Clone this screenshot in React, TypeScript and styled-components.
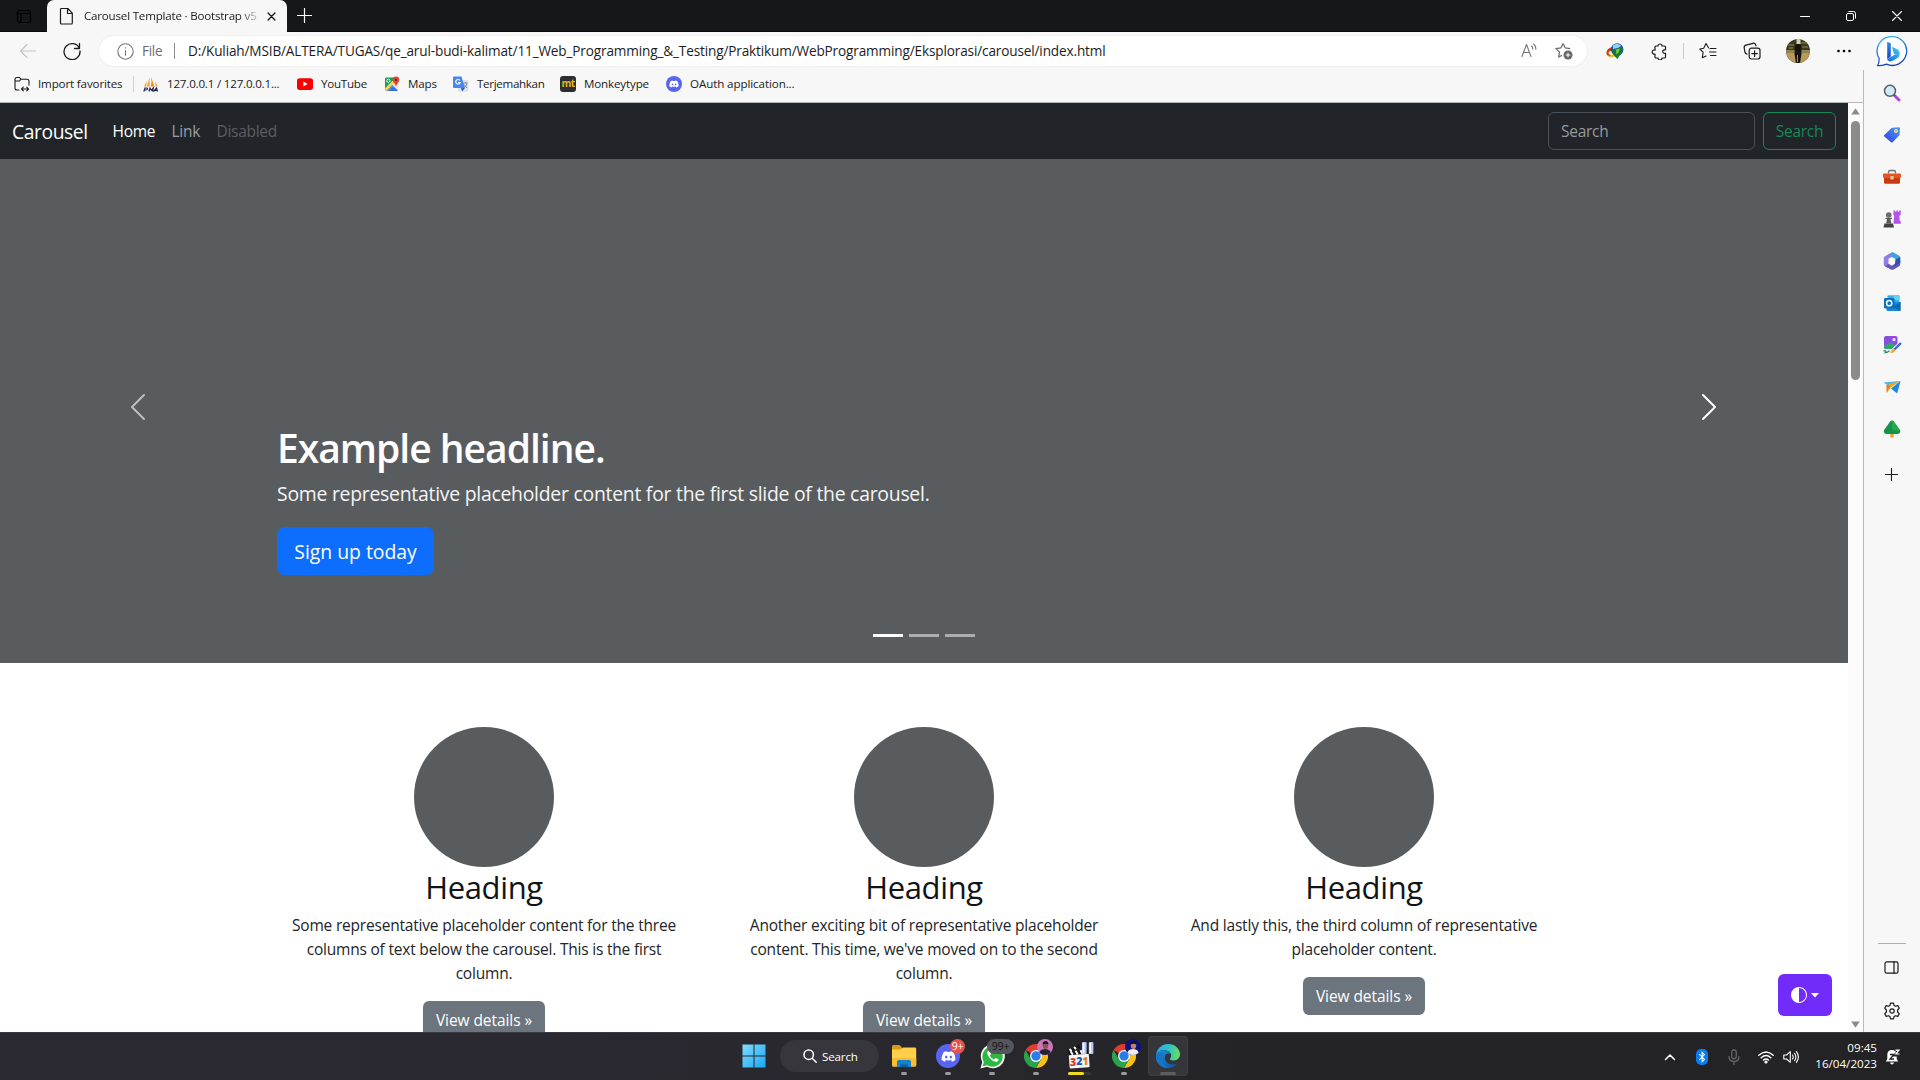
import React from 'react';
import styled, { createGlobalStyle, css } from 'styled-components';
import { FaDiscord, FaBluetoothB } from 'react-icons/fa';

const GlobalStyle = createGlobalStyle`
  * { box-sizing: border-box; }
  html, body { margin: 0; padding: 0; overflow: hidden; }
  body { font-family: "Open Sans", "Noto Sans", sans-serif; background: #fff; }
  svg { display: block; flex: none; }
  p, h1, h2 { margin: 0; }
`;

const uiText = css`
  font-size: 11.6px;
  letter-spacing: -0.15px;
  white-space: nowrap;
`;

const Window = styled.div`
  width: 1920px;
  height: 1080px;
  display: flex;
  flex-direction: column;
  overflow: hidden;
  background: #f7f7f7;
`;

/* ---------- Title bar ---------- */
const TitleBar = styled.header`
  height: 32px;
  flex: none;
  display: flex;
  align-items: stretch;
  background: #161719;
  border-bottom: 1px solid #08090a;
`;
const TabActions = styled.div`
  width: 47px;
  display: flex;
  align-items: center;
  padding-left: 16px;
`;
const Tab = styled.div`
  width: 240px;
  height: 32px;
  display: flex;
  align-items: center;
  padding: 0 10px 0 11px;
  background: #f7f7f7;
  border-radius: 7px 7px 0 0;
`;
const TabTitle = styled.span`
  ${uiText}
  letter-spacing: -0.21px;
  width: 174px;
  margin: 0 9px 0 6px;
  padding-bottom: 1px;
  overflow: hidden;
  background: linear-gradient(90deg, #1b1b1b 155px, #c4c4c4 173px);
  -webkit-background-clip: text;
  background-clip: text;
  color: transparent;
`;
const NewTab = styled.div`
  width: 35px;
  display: flex;
  align-items: center;
  justify-content: center;
`;
const WindowControls = styled.div`
  margin-left: auto;
  display: flex;
`;
const WindowButton = styled.div`
  width: 46px;
  display: flex;
  align-items: center;
  justify-content: center;
`;

/* ---------- Address row ---------- */
const Toolbar = styled.div`
  height: 38px;
  flex: none;
  display: flex;
  align-items: center;
`;
const Cell = styled.div<{ $w: number }>`
  width: ${p => p.$w}px;
  height: 38px;
  flex: none;
  display: flex;
  align-items: center;
  justify-content: center;
`;
const NavButtons = styled.div`
  width: 99px;
  flex: none;
  display: flex;
  align-items: center;
  gap: 26px;
  padding-left: 19px;
`;
const AddressBar = styled.div`
  width: 1488px;
  height: 30px;
  flex: none;
  display: flex;
  align-items: center;
  padding: 0 10px 0 18px;
  border-radius: 15px;
  background: #fff;
  box-shadow: 0 0 2px rgba(0, 0, 0, 0.1);
  font-size: 13.6px;
  letter-spacing: -0.146px;
  white-space: nowrap;
`;
const Scheme = styled.span`
  width: 32px;
  margin-left: 8px;
  padding-bottom: 1px;
  color: #6d6d6d;
  letter-spacing: -0.3px;
`;
const Url = styled.span`
  margin-left: 13px;
  padding-bottom: 1px;
  color: #1d1d1d;
  flex: 1;
`;
const VLine = styled.div<{ $h: number; $c: string }>`
  width: 1px;
  height: ${p => p.$h}px;
  flex: none;
  background: ${p => p.$c};
`;

/* ---------- Body ---------- */
const Body = styled.div`
  height: 962px;
  flex: none;
  display: flex;
`;
const Main = styled.div`
  width: 1863px;
  display: flex;
  flex-direction: column;
`;
const Bookmarks = styled.div`
  height: 33px;
  flex: none;
  display: flex;
  align-items: center;
  padding: 0 0 5px 14px;
  border-bottom: 1px solid #b5b6b8;
`;
const Bookmark = styled.div<{ $w: number; $indent?: number; $ls?: number }>`
  ${uiText}
  letter-spacing: ${p => p.$ls ?? -0.15}px;
  width: ${p => p.$w}px;
  padding-left: ${p => p.$indent ?? 0}px;
  display: flex;
  align-items: center;
  gap: 8px;
  color: #1b1b1b;
`;
const MonkeyIcon = styled.span`
  width: 16px;
  height: 16px;
  border-radius: 3px;
  background: #2c2e31;
  color: #e2b714;
  font: 700 10px/14px "Open Sans", sans-serif;
  letter-spacing: -0.6px;
  text-align: center;
`;
const DiscordDot = styled.span<{ $s: number }>`
  width: ${p => p.$s}px;
  height: ${p => p.$s}px;
  border-radius: 50%;
  background: #5865f2;
  color: #fff;
  display: flex;
  align-items: center;
  justify-content: center;
`;
const PageRow = styled.div`
  height: 929px;
  display: flex;
`;
const Page = styled.div`
  position: relative;
  width: 1848px;
  height: 929px;
  overflow: hidden;
  background: #fff;
`;
const ScrollTrack = styled.div`
  width: 15px;
  display: flex;
  flex-direction: column;
  align-items: center;
  background: #fcfcfc;
  padding: 5px 0 4px;
`;
const ScrollThumb = styled.div`
  width: 9px;
  height: 259px;
  margin: 6px 0 auto;
  border-radius: 5px;
  background: #8b8b8b;
`;

/* ---------- Navbar ---------- */
const Navbar = styled.nav`
  height: 56px;
  display: flex;
  align-items: center;
  padding: 0 12px;
  background: #212529;
  font-size: 15.5px;
  letter-spacing: -0.28px;
`;
const Brand = styled.span`
  width: 100.5px;
  color: #fff;
  font-size: 19.3px;
  letter-spacing: -0.42px;
`;
const NavLink = styled.span<{ $c: string; $w: number }>`
  width: ${p => p.$w}px;
  color: ${p => p.$c};
`;
const SearchInput = styled.div`
  width: 207px;
  height: 38px;
  margin: 0 8px 0 auto;
  padding: 0 12px;
  display: flex;
  align-items: center;
  border: 1px solid #495057;
  border-radius: 6px;
  color: #969a9e;
`;
const SearchButton = styled.div`
  width: 73px;
  height: 38px;
  display: flex;
  align-items: center;
  justify-content: center;
  border: 1px solid #198754;
  border-radius: 6px;
  color: #198754;
`;

/* ---------- Carousel ---------- */
const Carousel = styled.section`
  position: relative;
  height: 504px;
  display: grid;
  grid-template-columns: 277px 1fr 277px;
  background: #595c5e;
  color: #fff;
`;
const Control = styled.div<{ $dim?: boolean }>`
  display: flex;
  align-items: center;
  justify-content: center;
  padding: 0 1px 8px 0;
  opacity: ${p => (p.$dim ? 0.6 : 1)};
`;
const Caption = styled.div`
  display: flex;
  flex-direction: column;
  justify-content: flex-end;
  align-items: flex-start;
  padding-bottom: 88px;
`;
const Headline = styled.h1`
  margin-bottom: 7px;
  font-size: 39px;
  font-weight: 600;
  line-height: 48px;
  letter-spacing: -1px;
`;
const Lead = styled.p`
  margin-bottom: 18px;
  font-size: 19.4px;
  line-height: 30px;
  letter-spacing: -0.257px;
  color: #f4f5f5;
`;
const SignUp = styled.div`
  width: 157px;
  height: 48px;
  display: flex;
  align-items: center;
  justify-content: center;
  border-radius: 8px;
  background: #0d6efd;
  font-size: 19.4px;
  letter-spacing: -0.02px;
`;
const Indicators = styled.div`
  position: absolute;
  left: 0;
  right: 0;
  bottom: 26px;
  display: flex;
  justify-content: center;
  gap: 6px;
`;
const Indicator = styled.span<{ $active?: boolean }>`
  width: 30px;
  height: 3px;
  background: ${p => (p.$active ? '#fff' : '#acadae')};
`;

/* ---------- Feature columns ---------- */
const Features = styled.section`
  display: flex;
  padding: 64px 264px 0;
`;
const Feature = styled.article`
  width: 440px;
  display: flex;
  flex-direction: column;
  align-items: center;
  text-align: center;
  color: #212529;
`;
const Circle = styled.div`
  width: 140px;
  height: 140px;
  border-radius: 50%;
  background: #595c5e;
`;
const FeatureTitle = styled.h2`
  margin: 1px 0 7px;
  font-size: 31px;
  font-weight: 400;
  line-height: 38.4px;
  letter-spacing: -0.35px;
  color: #111417;
`;
const FeatureText = styled.p`
  margin-bottom: 16px;
  font-size: 15.5px;
  line-height: 24px;
  letter-spacing: -0.2px;
  white-space: pre-line;
`;
const DetailsButton = styled.div`
  width: 122px;
  height: 38px;
  display: flex;
  align-items: center;
  justify-content: center;
  border-radius: 6px;
  background: #6c757d;
  color: #fff;
  font-size: 15.5px;
  letter-spacing: -0.07px;
`;
const ThemeButton = styled.div`
  position: absolute;
  right: 16px;
  bottom: 16px;
  width: 54px;
  height: 42px;
  display: flex;
  align-items: center;
  justify-content: center;
  gap: 4px;
  border-radius: 6px;
  background: #712cf9;
`;

/* ---------- Edge side bar ---------- */
const Sidebar = styled.aside`
  width: 57px;
  display: flex;
  flex-direction: column;
  align-items: center;
  padding: 2px 1px 0 0;
  border-left: 1px solid #b9babb;
  background: #f7f7f7;
`;
const SideItem = styled.div<{ $h?: number }>`
  height: ${p => p.$h ?? 42}px;
  flex: none;
  display: flex;
  align-items: center;
  justify-content: center;
`;
const SideRule = styled.div`
  width: 28px;
  height: 1px;
  margin-top: auto;
  margin-bottom: 2px;
  background: #b0b0b0;
`;

/* ---------- Task bar ---------- */
const Taskbar = styled.footer`
  height: 48px;
  flex: none;
  display: grid;
  grid-template-columns: 732px 459px 1fr;
  border-top: 1px solid #3a393f;
  background: linear-gradient(90deg, #2b2a33 0%, #29282f 45%, #242426 65%, #232325 100%);
  color: #fff;
`;
const TaskGroup = styled.div`
  grid-column: 2;
  display: flex;
  align-items: center;
  padding-bottom: 1px;
`;
const TaskSearch = styled.div`
  ${uiText}
  width: 99px;
  height: 32px;
  margin: 0 3px 0 4px;
  padding-left: 23px;
  display: flex;
  align-items: center;
  gap: 5px;
  border-radius: 16px;
  background: #37363d;
`;
const TaskItem = styled.div<{ $active?: boolean }>`
  position: relative;
  width: 40px;
  height: 40px;
  margin: 0 2px;
  display: flex;
  align-items: center;
  justify-content: center;
  border-radius: 4px;
  background: ${p => (p.$active ? '#36353a' : 'transparent')};
  box-shadow: ${p => (p.$active ? 'inset 0 0 0 1px #3e3d42' : 'none')};
`;
const Running = styled.span<{ $w: number; $c: string; $x?: number }>`
  position: absolute;
  bottom: 1px;
  left: ${p => p.$x ?? 20 - p.$w / 2}px;
  width: ${p => p.$w}px;
  height: 3px;
  border-radius: 2px;
  background: ${p => p.$c};
`;
const Badge = styled.span<{ $w: number; $x: number; $bg: string; $c: string }>`
  position: absolute;
  top: 3px;
  left: ${p => p.$x}px;
  width: ${p => p.$w}px;
  height: 15px;
  border-radius: 8px;
  background: ${p => p.$bg};
  color: ${p => p.$c};
  font-size: 10.5px;
  line-height: 14px;
  letter-spacing: -0.2px;
  text-align: center;
`;
const BadgeFace = styled.span`
  position: absolute;
  top: 3px;
  left: 21px;
`;
const Tray = styled.div`
  display: flex;
  align-items: center;
  justify-content: flex-end;
  padding-right: 11px;
`;
const TrayIcon = styled.div<{ $w: number }>`
  width: ${p => p.$w}px;
  display: flex;
  justify-content: center;
`;
const BluetoothPill = styled.span`
  width: 12px;
  height: 16px;
  border-radius: 5px;
  background: #0a7cf0;
  display: flex;
  align-items: center;
  justify-content: center;
`;
const Clock = styled.div`
  ${uiText}
  width: 77px;
  padding-bottom: 1px;
  text-align: right;
  line-height: 16px;
  letter-spacing: 0.02px;
`;

/* ---------- Icons ---------- */
type StrokeProps = { s?: number; c?: string; w?: number; children: React.ReactNode; box?: number };
const Line = ({ s = 16, c = '#1b1b1b', w = 1.1, box = 16, children }: StrokeProps) => (
  <svg width={s} height={s} viewBox={`0 0 ${box} ${box}`} fill="none" stroke={c} strokeWidth={w} strokeLinecap="round" strokeLinejoin="round">{children}</svg>
);

const Star = 'M7 1.3 8.9 5.2 13.2 5.8M7 1.3 5.1 5.2.8 5.8 3.9 8.8 3.2 13.1 6 11.6';

const IdmIcon = () => (
  <svg width="18" height="18" viewBox="0 0 18 18">
    <ellipse cx="6" cy="10.5" rx="5.8" ry="4.8" fill="#e5c12e" transform="rotate(-18 6 10.5)" />
    <path d="M1 13c-1.300-3 .5-7 5-8l3 2-5 7z" fill="#c23b22" />
    <ellipse cx="5" cy="11" rx="2.500" ry="2" fill="#fff5bd" />
    <circle cx="11.200" cy="7.500" r="6.200" fill="#1d56a4" />
    <path d="M7 3.600c3-2.400 7-1.600 8 .4l-3 2-5 1z" fill="#92d1f3" />
    <path d="M5.500 8 11 6.500l6-1-1.500 5.500-4.200 6-4.300-4.500 2.500-.2z" fill="#1a7a29" />
    <path d="m10 7.500 4-1-1.500 4-2 2z" fill="#70cf45" />
  </svg>
);

const Avatar = () => (
  <svg width="24" height="24" viewBox="0 0 24 24">
    <defs><clipPath id="av"><circle cx="12" cy="12" r="12" /></clipPath></defs>
    <g clipPath="url(#av)">
      <rect width="24" height="24" fill="#3b3a20" />
      <rect y="11" width="24" height="4" fill="#8f8350" />
      <rect y="14" width="24" height="10" fill="#b8995a" />
      <path d="M1 6h7M15 4h7M3 9h4M16 8h6" stroke="#77713b" strokeWidth="1.500" />
      <rect x="10.500" y="0" width="4" height="5" fill="#d6d0a8" />
      <path d="M9 6.500c1-2 5-2 6 0l.5 8-1.500 9.500h-4l-1.500-9z" fill="#17130f" />
      <path d="M11.500 16v7" stroke="#a88d58" />
    </g>
  </svg>
);

const BingIcon = () => (
  <svg width="32" height="32" viewBox="0 0 32 32">
    <defs>
      <linearGradient id="bo" x1="0" y1="0" x2=".3" y2="1"><stop stopColor="#27b7ee" /><stop offset=".5" stopColor="#2383e8" /><stop offset="1" stopColor="#173fae" /></linearGradient>
      <linearGradient id="bb" x1="0" y1="0" x2="0" y2="1"><stop stopColor="#2b8cf0" /><stop offset="1" stopColor="#1a45c8" /></linearGradient>
      <linearGradient id="bc" x1="0" y1="1" x2="1" y2="0"><stop stopColor="#1668dd" /><stop offset="1" stopColor="#45d0f2" /></linearGradient>
    </defs>
    <path d="M16.300 1.600a14.400 14.400 0 1 1-5.800 27.600c-2.600 1.300-5.800 1.500-8.800 1.300 1.300-2.100 1.500-4.300 1.400-7.200A14.400 14.400 0 0 1 16.300 1.600z" fill="#fff" stroke="url(#bo)" strokeWidth="1.300" />
    <path d="m11.200 6.800 3.600 1.400v13.300l-3.600 2.500z" fill="url(#bb)" />
    <path d="m16 11.800 5.200 2.400c1.600.8 2.500 2.200 2.500 4.300 0 2.200-1 4-2.800 5l-4.700 2.600c-2.400 1-4.700 0-5-2.100l6.600-3.800 1.500-.8-1.600-1.200z" fill="url(#bc)" />
  </svg>
);

const PmaIcon = () => (
  <svg width="16" height="16" viewBox="0 0 16 16">
    <path d="M6.500 1.500 3.800 10.500h2.900zM1 10.500 3.800 5l-.6 5.500z" fill="#f3a13a" />
    <path d="M8 .5c.8 3 .5 7-.3 10h3.600z" fill="#ee8b1c" />
    <path d="M11.500 4c.8 2 1 4.500.8 6.500h2.500z" fill="#f8a845" />
    <path d="M.8 15.500 2 12h1.500q1.400.1.800 1.200-.5.900-2.500.8M6 15.500 7 12l1.300 2.200 2-2.200-.8 3.500M10.500 15.500l3-3.500 1 3.500M11.800 14.300h2.500" stroke="#1d2a55" strokeWidth="1.200" fill="none" />
  </svg>
);

const YoutubeIcon = () => (
  <svg width="16" height="16" viewBox="0 0 16 16"><rect y="2.300" width="16" height="11.600" rx="2.600" fill="#f80100" /><path d="m6.400 5.600 4.200 2.500-4.200 2.500z" fill="#fff" /></svg>
);

const MapsIcon = () => (
  <svg width="16" height="16" viewBox="0 0 16 16">
    <rect x=".8" y="1.500" width="13.500" height="13.500" rx="1.200" fill="#e8e8e8" />
    <path d="M1 2.500 2 1.500h8.500L9 7 1 14z" fill="#1f9e56" />
    <path d="m1 13.500 6-6 7 7-.5.500H2z" fill="#4e8df3" />
    <path d="m5 15 4-4 4.500 4z" fill="#2f6fe0" />
    <path d="m.8 12.500 7.700-7.700 1.800 1.800L2.500 15z" fill="#fcd34a" />
    <path d="M12 .5a3.300 3.300 0 0 1 3.300 3.400c0 2.200-2.500 3.600-3.300 6.500-.8-2.900-3.300-4.300-3.300-6.500A3.300 3.300 0 0 1 12 .5z" fill="#e74335" />
    <circle cx="12" cy="3.900" r="1.200" fill="#8c1f15" />
    <circle cx="4.300" cy="4.800" r="1.600" fill="none" stroke="#fff" strokeWidth=".9" />
  </svg>
);

const TranslateIcon = () => (
  <svg width="16" height="16" viewBox="0 0 16 16">
    <rect x="5" y="4" width="10.500" height="11.500" rx="1" fill="#dfe1e3" />
    <path d="M1 .5h7.500L12 12H1a1 1 0 0 1-1-1V1.500a1 1 0 0 1 1-1z" fill="#4687f1" />
    <path d="M8 12h4l-3 3.500z" fill="#2560c4" />
    <path d="M6.800 4.300A2.300 2.300 0 1 0 7.200 6.500H5" stroke="#fff" fill="none" strokeWidth="1.100" />
    <path d="M10.500 7h4M12.500 6v1M11 8.500l3 3.500M14 7.500c-.5 2-1.500 3.500-2.500 4" stroke="#687a8a" fill="none" strokeWidth=".8" />
  </svg>
);

const SearchColor = () => (
  <svg width="18" height="18" viewBox="0 0 18 18"><path d="m12 12 4 4" stroke="#b440e0" strokeWidth="3" strokeLinecap="round" /><path d="m10.300 10.300 1.700 1.700" stroke="#555" strokeWidth="2" /><circle cx="7" cy="6.800" r="5.500" fill="#cfeafa" stroke="#565b60" strokeWidth="1.500" /></svg>
);
const TagColor = () => (
  <svg width="18" height="18" viewBox="0 0 18 18"><defs><linearGradient id="tg" x1="1" y1="0" x2="0" y2="1"><stop stopColor="#4f9cf8" /><stop offset="1" stopColor="#2c40e0" /></linearGradient></defs><path d="M9.500 1.700 16 1.200q1 0 1 1l-.4 6.300q0 .6-.5 1.100l-6.400 6.600q-.8.700-1.600 0L1.300 10.500q-.7-.8 0-1.600L8 2.400q.6-.6 1.500-.7z" fill="url(#tg)" /><circle cx="13" cy="5" r="2" fill="#f6e27a" /><circle cx="13" cy="5" r=".8" fill="#7aa6d8" /></svg>
);
const ToolboxColor = () => (
  <svg width="18" height="18" viewBox="0 0 18 18"><path d="M5.500 5.500V4q0-1.500 1.500-1.500h4Q12.500 2.500 12.500 4v1.500" stroke="#6d7276" strokeWidth="1.300" fill="none" /><path d="M1 9h16v5.500q0 1.300-1.200 1.300H2.200Q1 15.800 1 14.500z" fill="#c93a10" /><path d="M1 5.500h16q1 0 1 1V9q0 1-1 1H1Q0 10 0 9V6.500q0-1 1-1z" fill="#e5561f" /><rect x="7.300" y="8" width="3.400" height="3.400" rx="1" fill="#f2c9a6" /></svg>
);
const ChessColor = () => (
  <svg width="18" height="18" viewBox="0 0 18 18"><path d="M10.500.5h1.800v1.600h1V.5h1.800v1.600h1V.5H17.800v4l-1.500 1.300.5 5.500h1v2.500H10.500l.7-8-.8-1.300z" fill="#b453ec" /><circle cx="5.700" cy="5" r="2.800" fill="#6c6c6c" /><path d="M2.500 7.700h6.400v1.200H7.500l.8 4.600H3.200l.8-4.600H2.500z" fill="#5a5a5a" /><path d="M1.500 13.500h8.500l1 4H.5z" fill="#424242" /></svg>
);
const M365Color = () => (
  <svg width="18" height="18" viewBox="0 0 18 18"><path d="M9 .3 2 4.200Q.8 4.900.8 6.200v6q0 1.300 1.100 2L5 15.800l2.200-2.800-1.700-1V6.800L10 4z" fill="#8e80e0" /><path d="M9 .3q.9-.3 1.700.2l5.500 3.200q1 .6 1 1.800v5.500l-4.700-2.500V7L7 4z" fill="#3da5d8" /><path d="M17.200 8v4.200q0 1.300-1.100 2l-5.400 3.200q-1.400.7-2.700 0L2 14.300l3.500-2.300 3.500 1.700 4-2.700V7.500z" fill="#6455ba" /><path d="M12.500 7.500 17.200 5v5.800l-5.700 3.700z" fill="#3152a8" /><path d="m9 5.700 2.900 1.700v3.300L9 12.400l-2.900-1.700V7.400z" fill="#fff" /></svg>
);
const OutlookColor = () => (
  <svg width="18" height="18" viewBox="0 0 18 18"><rect x="4.500" y="1.200" width="12" height="8" rx="1" fill="#35b2ec" /><path d="M10.500 1.200h5q1 0 1 1V6h-6z" fill="#65cff5" /><path d="M3.500 8h14v8q0 1-1 1h-12q-1 0-1-1z" fill="#168bd7" /><path d="m10 13 7.500-5v9z" fill="#0d66b5" /><rect x="1" y="4" width="10.500" height="10.500" rx="1.200" fill="#0b6fc2" /><circle cx="6.200" cy="9.200" r="2.600" fill="none" stroke="#fff" strokeWidth="1.500" /></svg>
);
const DesignerColor = () => (
  <svg width="20" height="20" viewBox="0 0 20 20"><rect x="2" y="1" width="13.500" height="13" rx="2" fill="#8a4de0" /><path d="M2 11.500 7 7.800q1.500-1 3 .2l4 3.500-1 2.500H4q-2 0-2-2z" fill="#2ba86a" /><circle cx="12" cy="4.700" r="1.600" fill="#f7dff8" /><path d="m18.500 8.500-6.500 6" stroke="#f7f7f7" strokeWidth="4" strokeLinecap="round" /><path d="m18.300 8.700-6 5.800" stroke="#3f66e6" strokeWidth="2.400" strokeLinecap="round" /><path d="M12.500 13.700q1.300 1.300-.3 3-1.700 1.700-4.200 1 1.500-1 1.700-2.400.8-2 2.800-1.600z" fill="#f2a52c" /><path d="M1.500 16.200c2-1.500 3 .5 1.800 1.500 2 0 3-.7 4.200-2" stroke="#1c8a62" fill="none" strokeWidth="1.200" /></svg>
);
const PlaneColor = () => (
  <svg width="18" height="18" viewBox="0 0 18 18"><path d="M.5 4.500 17.500 3 6.500 8.500z" fill="#46b7f0" /><path d="M3.500 7 17.500 3 7.500 9.800 3.800 15z" fill="#f2a52e" /><path d="M3.500 7 7.800 8l-2.300 3-1.700 4z" fill="#d9821c" /><path d="M17.500 3 14.200 15.500 8 10.500z" fill="#1e88dc" /></svg>
);
const TreeColor = () => (
  <svg width="18" height="18" viewBox="0 0 18 18"><rect x="7.300" y="12" width="3.400" height="5.500" rx="1" fill="#f0a030" /><path d="M9 .5q1 0 1.800 1L16.900 10q1.200 3.600-2.100 4H3.200Q.1 13.600 1.100 10L7.200 1.500Q8 .5 9 .5z" fill="#159447" /><path d="M9 .5q1 0 1.800 1L16.900 10q-4.200 2-7.900-1.500z" fill="#28a94f" /></svg>
);

const ChromeIcon = () => (
  <svg width="24" height="24" viewBox="0 0 24 24">
    <path d="M12 12 1.600 6A12 12 0 0 1 22.400 6z" fill="#e33b2e" />
    <path d="M12 6h10.400A12 12 0 0 1 12 24l5.200-9z" fill="#fbc116" />
    <path d="M1.600 6 6.800 15 12 18l5.200-3L12 24A12 12 0 0 1 1.600 6z" fill="#2ba24c" />
    <circle cx="12" cy="12" r="6" fill="#fff" /><circle cx="12" cy="12" r="4.700" fill="#2a7de9" />
  </svg>
);
const Face = ({ bg, skin, shirt }: { bg: string; skin: string; shirt: string }) => (
  <svg width="16" height="16" viewBox="0 0 16 16">
    <defs><clipPath id={`f${bg.slice(1)}`}><circle cx="8" cy="8" r="8" /></clipPath></defs>
    <g clipPath={`url(#f${bg.slice(1)})`}><rect width="16" height="16" fill={bg} /><path d="M2 16q0-6 6-6t6 6z" fill={shirt} /><ellipse cx="8.500" cy="6.500" rx="2.700" ry="3.600" fill={skin} /><path d="M5.500 5.500q0-3.500 3-3.500t3 3.500q-3-1.500-6 0z" fill="#17131b" /></g>
  </svg>
);
const ExplorerIcon = () => (
  <svg width="26" height="24" viewBox="0 0 26 24">
    <path d="M1 2.500Q1 1 2.500 1h6L11 3.500V7H1z" fill="#d99a1b" />
    <path d="M1 5.500h8.500L12 3.500h12q1.200 0 1.200 1.200V21q0 1.500-1.500 1.500H2.500Q1 22.500 1 21z" fill="#ffcf48" />
    <path d="M1 14h24.200v7q0 1.500-1.500 1.500H2.500Q1 22.500 1 21z" fill="#f9bd35" />
    <path d="M6 23v-5.500Q6 16 7.500 16h11q1.500 0 1.500 1.500V23z" fill="#1681c9" /><path d="M9.500 23v-2.500h7V23z" fill="#0c5f9f" />
  </svg>
);
const ClapperIcon = () => (
  <svg width="28" height="28" viewBox="0 0 28 28">
    <g transform="rotate(-4 12 16)">
      <rect x="3" y="12" width="20" height="14" rx="1" fill="#f5f5f5" />
      <rect x="3" y="8.500" width="20" height="4" fill="#151515" /><path d="m5 8.500 2 4M10 8.500l2 4M15 8.500l2 4" stroke="#fff" strokeWidth="2" />
    </g>
    <path d="M1 8 13 2.500l1 3.500L2.500 10z" fill="#151515" /><path d="m3.500 7 2 2M8 5l2 2" stroke="#fff" strokeWidth="2" />
    <text x="4" y="23.500" fontFamily="Open Sans, sans-serif" fontSize="10.500" fontWeight="800" fill="#d7391f">3</text>
    <text x="10.300" y="23.300" fontFamily="Open Sans, sans-serif" fontSize="10.500" fontWeight="800" fill="#2456b5">2</text>
    <text x="16.300" y="23" fontFamily="Open Sans, sans-serif" fontSize="10.500" fontWeight="800" fill="#d98420">1</text>
    <rect x="16" y="0" width="4.600" height="12" rx="1" fill="#b8c6f0" /><rect x="22.800" y="0" width="4.600" height="12" rx="1" fill="#b8c6f0" />
    <path d="M17.500 1v10M24.300 1v10" stroke="#fff" strokeWidth="1.500" />
  </svg>
);
const EdgeIcon = () => (
  <svg width="24" height="24" viewBox="0 0 24 24">
    <defs>
      <linearGradient id="eg" x1="0" y1=".4" x2="1" y2=".5"><stop stopColor="#2aa6e8" /><stop offset=".5" stopColor="#2cc3c8" /><stop offset="1" stopColor="#67e05a" /></linearGradient>
      <linearGradient id="eb" x1="0" y1="0" x2="1" y2="1"><stop stopColor="#1b91dd" /><stop offset="1" stopColor="#0c4f9e" /></linearGradient>
    </defs>
    <path d="M0 11.500C.7 4.500 5.800 0 12 0c7 0 12 5 12 10.300 0 3.700-2.800 6.200-6.300 6.200-3 0-4.400-1-3.500-2.300.8-1.100 1-1.800 1-2.800C15.200 8.500 11.500 6 7.500 6 4 6 1 8.500 0 11.500z" fill="url(#eg)" />
    <path d="M0 12c.5-4 4-6 7.500-6 3.500 0 6.500 1.700 7.400 4-1.200-.8-3-.9-4.300.1-3.600 2.800-1.500 10.500 6 10.500 2 0 3.700-.6 5-1.400C19.500 22.200 16 24 12 24 5 24-.5 18.500 0 12z" fill="url(#eb)" />
    <path d="M7.700 10c-3.700 5-.5 13 6.300 13.800C6 25-.5 18.500 0 12 1.200 8.500 4.500 8 7.700 10z" fill="#1576c8" />
  </svg>
);

const chevronLeft = 'M11.354 1.646a.5.5 0 0 1 0 .708L5.707 8l5.647 5.646a.5.5 0 0 1-.708.708l-6-6a.5.5 0 0 1 0-.708l6-6a.5.5 0 0 1 .708 0z';
const chevronRight = 'M4.646 1.646a.5.5 0 0 1 .708 0l6 6a.5.5 0 0 1 0 .708l-6 6a.5.5 0 0 1-.708-.708L10.293 8 4.646 2.354a.5.5 0 0 1 0-.708z';

const features = [
  'Some representative placeholder content for the three\ncolumns of text below the carousel. This is the first\ncolumn.',
  "Another exciting bit of representative placeholder\ncontent. This time, we've moved on to the second\ncolumn.",
  'And lastly this, the third column of representative\nplaceholder content.',
];
const sideIcons = [SearchColor, TagColor, ToolboxColor, ChessColor, M365Color, OutlookColor, DesignerColor, PlaneColor, TreeColor];

export default function App() {
  return (
    <Window>
      <GlobalStyle />
      <TitleBar>
        <TabActions>
          <Line c="#000" w={1.2}><rect x="1.500" y="2.500" width="13" height="12" rx="2" /><path d="M1.500 5.500h13M5 5.500v9" /></Line>
        </TabActions>
        <Tab>
          <Line s={20} box={20} w={1.2}><path d="M3.500 2.500h6.200l4.600 4.700V17q0 1-1 1H3.500q-1 0-1-1V3.500q0-1 1-1zM9.500 2.700V7.500h4.600" /></Line>
          <TabTitle>Carousel Template · Bootstrap v5</TabTitle>
          <Line s={9} box={10} w={1.5}><path d="m1.200 1.200 7.600 7.600M8.800 1.200 1.200 8.800" /></Line>
        </Tab>
        <NewTab><Line c="#fff" s={15} box={15} w={1.2}><path d="M7.500.5v14M.5 7.500h14" /></Line></NewTab>
        <WindowControls>
          <WindowButton><Line c="#fff" s={10} box={10} w={1}><path d="M.5 5.500h9" /></Line></WindowButton>
          <WindowButton><Line c="#fff" s={10} box={10} w={1}><rect x=".5" y="2.500" width="7" height="7" rx="1.500" /><path d="M2.800.5H7.500q2 0 2 2v4.700" /></Line></WindowButton>
          <WindowButton><Line c="#fff" s={10} box={10} w={1.1}><path d="m.5.5 9 9M9.500.5l-9 9" /></Line></WindowButton>
        </WindowControls>
      </TitleBar>

      <Toolbar>
        <NavButtons>
          <Line c="#c3c3c3" s={18} box={18}><path d="M16.800 9H1.500M8 2.500 1.500 9 8 15.500" /></Line>
          <Line s={18} box={18} w={1.3}><path d="M16.300 6.300A8 8 0 1 0 17 9M16.500 1.500v5h-5" /></Line>
        </NavButtons>
        <AddressBar>
          <Line c="#767676" s={17} box={17}><circle cx="8.500" cy="8.500" r="7.700" /><path d="M8.500 7.500v4.700M8.500 4.900v.2" /></Line>
          <Scheme>File</Scheme>
          <VLine $h={16} $c="#8c8c8c" />
          <Url>D:/Kuliah/MSIB/ALTERA/TUGAS/qe_arul-budi-kalimat/11_Web_Programming_&amp;_Testing/Praktikum/WebProgramming/Eksplorasi/carousel/index.html</Url>
          <Cell $w={42}><Line c="#767676"><path d="m1 13.500 4.500-12 4.500 12M2.800 9.500h5.600M10.500 3q1.500 1.200 1.300 3.200M12.500 1q2.600 2 2.300 5.200" /></Line></Cell>
          <Cell $w={27}>
            <svg width="18" height="18" viewBox="0 0 18 18"><path d={Star} fill="none" stroke="#6a6a6a" strokeWidth="1.100" strokeLinejoin="round" transform="scale(1.150)" /><circle cx="13" cy="13" r="4.500" fill="#666" /><path d="M13 10.700v4.600M10.700 13h4.600" stroke="#fff" /></svg>
          </Cell>
        </AddressBar>
        <Cell $w={56}><IdmIcon /></Cell>
        <Cell $w={32}><Line s={17} box={17} w={1.2}><path d="M5 3h2a2 2 0 0 1 4 0h2.500q1 0 1 1v2.800h-1a1.800 1.800 0 0 0 0 3.600h1V14q0 1-1 1H11a2 2 0 0 1-4 0H5q-1 0-1-1v-3a2 2 0 0 1-2.800-2A2 2 0 0 1 4 7.200V4q0-1 1-1z" /></Line></Cell>
        <Cell $w={16}><VLine $h={16} $c="#cccccc" /></Cell>
        <Cell $w={34}><Line s={18} box={18} w={1.1}><path d="M9.500 5.800 7 1.500 4.700 6.200.8 7l3.300 3.200-.8 5.500L7 14M11 6.500h6M10.500 10h6.500M11.500 13.500H17" /></Line></Cell>
        <Cell $w={54}><Line s={18} box={18} w={1.2}><rect x="6.200" y="6.200" width="10.800" height="10.800" rx="2.200" /><path d="M11.600 8.800v5.600M8.800 11.600h5.600M4 12.200Q2.500 11.800 2 10.300L1.200 6Q.8 3.800 3 3.200L10 1.300q2-.4 2.700 1.500l.3 1" /></Line></Cell>
        <Cell $w={38}><Avatar /></Cell>
        <Cell $w={54}><svg width="16" height="4" viewBox="0 0 16 4"><circle cx="2.500" cy="2" r="1.300" /><circle cx="8" cy="2" r="1.300" /><circle cx="13.500" cy="2" r="1.300" /></svg></Cell>
        <Cell $w={42}><BingIcon /></Cell>
      </Toolbar>

      <Body>
        <Main>
          <Bookmarks>
            <Bookmark $w={119}><Line s={16}><path d="M5 14H3q-2 0-2-2V3.500Q1 1.500 3 1.500h2.500L7 3.200h6q2 0 2 2V9M1 5h4.500L7 3.200M7.500 13h7M9.300 11.200 7.500 13l1.800 1.800M12.700 11.200l1.800 1.800-1.800 1.800" /></Line>Import favorites</Bookmark>
            <VLine $h={16} $c="#cfcfcf" />
            <Bookmark $w={163} $indent={9} $ls={-0.2}><PmaIcon />127.0.0.1 / 127.0.0.1...</Bookmark>
            <Bookmark $w={87} $ls={-0.25}><YoutubeIcon />YouTube</Bookmark>
            <Bookmark $w={69}><MapsIcon />Maps</Bookmark>
            <Bookmark $w={107} $ls={-0.32}><TranslateIcon />Terjemahkan</Bookmark>
            <Bookmark $w={106}><MonkeyIcon>mt</MonkeyIcon>Monkeytype</Bookmark>
            <Bookmark $w={140} $ls={-0.1}><DiscordDot $s={16}><FaDiscord size={10} /></DiscordDot>OAuth application...</Bookmark>
          </Bookmarks>
          <PageRow>
            <Page>
              <Navbar>
                <Brand>Carousel</Brand>
                <NavLink $c="#fff" $w={59}>Home</NavLink>
                <NavLink $c="#9b9d9f" $w={45}>Link</NavLink>
                <NavLink $c="#5c5f62" $w={70}>Disabled</NavLink>
                <SearchInput>Search</SearchInput>
                <SearchButton>Search</SearchButton>
              </Navbar>
              <Carousel>
                <Control $dim><svg width="32" height="32" viewBox="0 0 16 16" fill="#fff"><path d={chevronLeft} /></svg></Control>
                <Caption>
                  <Headline>Example headline.</Headline>
                  <Lead>Some representative placeholder content for the first slide of the carousel.</Lead>
                  <SignUp>Sign up today</SignUp>
                </Caption>
                <Control><svg width="32" height="32" viewBox="0 0 16 16" fill="#fff"><path d={chevronRight} /></svg></Control>
                <Indicators><Indicator $active /><Indicator /><Indicator /></Indicators>
              </Carousel>
              <Features>
                {features.map(text => (
                  <Feature key={text}>
                    <Circle />
                    <FeatureTitle>Heading</FeatureTitle>
                    <FeatureText>{text}</FeatureText>
                    <DetailsButton>View details »</DetailsButton>
                  </Feature>
                ))}
              </Features>
              <ThemeButton>
                <svg width="16" height="16" viewBox="0 0 16 16" fill="#fff"><path d="M8 15A7 7 0 1 0 8 1v14zm0 1A8 8 0 1 1 8 0a8 8 0 0 1 0 16z" /></svg>
                <svg width="8" height="5" viewBox="0 0 8 5" fill="#fff"><path d="M0 0h8L4 4.500z" /></svg>
              </ThemeButton>
            </Page>
            <ScrollTrack>
              <svg width="9" height="7" viewBox="0 0 9 7"><path d="M4.500.3 8.800 6.500H.2z" fill="#8b8b8b" /></svg>
              <ScrollThumb />
              <svg width="9" height="7" viewBox="0 0 9 7"><path d="M4.500 6.700.2.500h8.600z" fill="#8b8b8b" /></svg>
            </ScrollTrack>
          </PageRow>
        </Main>
        <Sidebar>
          {sideIcons.map((Icon, i) => <SideItem key={i}><Icon /></SideItem>)}
          <SideItem $h={49}><Line s={13} box={13}><path d="M6.500.5v12M.5 6.500h12" /></Line></SideItem>
          <SideRule />
          <SideItem $h={43}><Line s={15} box={15} w={1.2}><rect x="1" y="1.800" width="13" height="11.400" rx="1.800" /><path d="M10 1.800v11.400" /></Line></SideItem>
          <SideItem $h={43}><Line s={18} box={18} w={1.2}><circle cx="9" cy="9" r="2.200" /><path d="M7.500 1.200h3l.5 2.200 1.600.9 2.200-.7 1.500 2.600L14.600 8v2l1.700 1.800-1.500 2.600-2.200-.7-1.600.9-.5 2.200h-3L7 14.600l-1.600-.9-2.200.7-1.500-2.600L3.400 10V8L1.700 6.200l1.500-2.600 2.200.7L7 3.400z" /></Line></SideItem>
        </Sidebar>
      </Body>

      <Taskbar>
        <TaskGroup>
          <TaskItem>
            <svg width="24" height="24" viewBox="0 0 24 24"><defs><linearGradient id="wn" x1="0" y1="0" x2="1" y2="1"><stop stopColor="#7fdcff" /><stop offset="1" stopColor="#1ca6f2" /></linearGradient></defs><path d="M.5.500h11v11H.500zM12.500.500h11v11h-11zM.500 12.500h11v11H.500zM12.500 12.500h11v11h-11z" fill="url(#wn)" /></svg>
          </TaskItem>
          <TaskSearch><Line c="#fff" s={14} box={14} w={1.5}><circle cx="5.700" cy="5.700" r="4.700" /><path d="m9.200 9.200 4 4" /></Line>Search</TaskSearch>
          <TaskItem><ExplorerIcon /><Running $w={6} $c="#9b9b9f" /></TaskItem>
          <TaskItem><DiscordDot $s={24}><FaDiscord size={15} /></DiscordDot><Badge $w={15} $x={22} $bg="#e6534e" $c="#fff">9+</Badge><Running $w={6} $c="#9b9b9f" /></TaskItem>
          <TaskItem>
            <svg width="25" height="25" viewBox="0 0 25 25"><path d="M.5 24.500 2.300 18A12 12 0 1 1 7 22.700z" fill="#fff" /><path d="m2.500 22.500 1.300-4.700a10.200 10.200 0 1 1 3.500 3.500z" fill="#2eb843" /><path d="M8.700 6.500 7.500 7.600c-1.500 4 5.500 11 9.300 10.200 1.800-.7 1.800-1.700 1.600-2.500l-2.700-1.400-1.500 1.600c-2-.7-3.500-2.200-4.300-4l1.100-1.400-1-2.900z" fill="#fff" /></svg>
            <Badge $w={27} $x={15} $bg="#55565b" $c="#111">99+</Badge><Running $w={6} $c="#9b9b9f" />
          </TaskItem>
          <TaskItem><ChromeIcon /><BadgeFace><Face bg="#c878b8" skin="#8c5150" shirt="#282238" /></BadgeFace><Running $w={6} $c="#9b9b9f" /></TaskItem>
          <TaskItem><ClapperIcon /><Running $w={23} $x={8} $c="#38383b" /><Running $w={16} $x={8} $c="#f6dc20" /></TaskItem>
          <TaskItem><ChromeIcon /><BadgeFace><Face bg="#10127c" skin="#b9846d" shirt="#eeeeee" /></BadgeFace><Running $w={6} $c="#9b9b9f" /></TaskItem>
          <TaskItem $active><EdgeIcon /><Running $w={16} $c="#5d5d61" /></TaskItem>
        </TaskGroup>
        <Tray>
          <TrayIcon $w={32}><Line c="#fff" s={12} box={12} w={1.5}><path d="m1.500 8.500 4.500-4.500 4.500 4.500" /></Line></TrayIcon>
          <TrayIcon $w={32}><BluetoothPill><FaBluetoothB size={12} color="#fff" /></BluetoothPill></TrayIcon>
          <TrayIcon $w={32}><Line c="#6d6d6e" w={1.2}><rect x="5.800" y=".8" width="4.400" height="9" rx="2.200" /><path d="M3 7.500q0 5 5 5t5-5M8 12.500v3" /></Line></TrayIcon>
          <TrayIcon $w={32}><Line c="#fff" w={1.4}><path d="M.8 6.200q7.200-6.600 14.400 0M3.200 8.700q4.800-4.400 9.600 0M5.500 11.100q2.500-2.200 5 0" /><circle cx="8" cy="13" r=".9" fill="#fff" /></Line></TrayIcon>
          <TrayIcon $w={18}><Line c="#fff" w={1.1}><path d="M.8 6h2.700L7.300 2.700v10.600L3.500 10H.8zM9.500 6q1.500 2 0 4M11.500 4.300q2.700 3.700 0 7.400M13.400 2.700q4 5.300 0 10.600" /></Line></TrayIcon>
          <Clock>09:45<br />16/04/2023</Clock>
          <TrayIcon $w={32}>
            <svg width="16" height="16" viewBox="0 0 16 16"><path d="M7 1q4.700 0 4.700 5v4l1.500 2.500H.8L2.300 10V6Q2.300 1 7 1zM5 13.500h4q-.5 2-2 2t-2-2z" fill="#fff" /><path d="M5 5.500h4l-4 4.500h4" stroke="#242426" strokeWidth="1.300" fill="none" /><path d="M9.500.5h5L10.500 6H15" stroke="#242426" strokeWidth="3" fill="none" /><path d="M10.500 1.200H14L10.800 5h3.700" stroke="#fff" strokeWidth="1.200" fill="none" /></svg>
          </TrayIcon>
        </Tray>
      </Taskbar>
    </Window>
  );
}
